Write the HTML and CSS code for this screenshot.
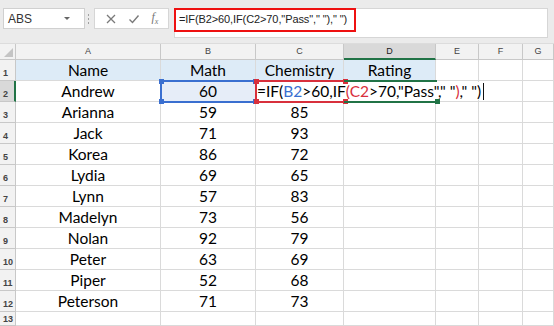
FILE: index.html
```html
<!DOCTYPE html>
<html>
  <head>
    <meta charset="UTF-8" />
    <link rel="stylesheet" href="styles.css">
  </head>
  <body>
    <div class="toolbar">
      <div class="name-box">
        <span class="name-text">ABS</span>
        <span class="name-arrow"></span>
      </div>
      <div class="grip">
        <span></span><span></span><span></span>
      </div>
      <div class="fx-box">
        <svg class="fx-icon" viewBox="0 0 12 12" width="12" height="12">
          <path d="M2 2 L10 10 M10 2 L2 10" stroke="#7a7a7a" stroke-width="1.3" fill="none"/>
        </svg>
        <svg class="fx-icon" viewBox="0 0 12 12" width="12" height="12">
          <path d="M1.5 6.5 L4.5 9.5 L10.5 2.5" stroke="#7a7a7a" stroke-width="1.4" fill="none"/>
        </svg>
        <span class="fx-label">f<sub>x</sub></span>
      </div>
      <div class="formula-bar">
        <div class="formula-input">=IF(B2&gt;60,IF(C2&gt;70,"Pass"," ")," ")</div>
      </div>
    </div>

    <div class="sheet">
      <div class="grid">
        <div class="corner"><span class="corner-tri"></span></div>
        <div class="col-head">A</div>
        <div class="col-head">B</div>
        <div class="col-head">C</div>
        <div class="col-head active">D</div>
        <div class="col-head">E</div>
        <div class="col-head">F</div>
        <div class="col-head">G</div>

        <div class="row-head">1</div>
        <div class="cell head">Name</div>
        <div class="cell head">Math</div>
        <div class="cell head">Chemistry</div>
        <div class="cell head">Rating</div>
        <div class="cell"></div>
        <div class="cell"></div>
        <div class="cell"></div>

        <div class="row-head active">2</div>
        <div class="cell">Andrew</div>
        <div class="cell ref-b">60</div>
        <div class="cell editing">
          <span class="edit-text">=IF(<span class="ref-blue">B2</span>&gt;60,IF<span class="ref-red">(C2</span>&gt;70,"Pass"," "<span class="ref-red">)</span>," ")<span class="caret"></span></span>
        </div>
        <div class="cell"></div>
        <div class="cell"></div>
        <div class="cell"></div>
        <div class="cell"></div>

        <div class="row-head">3</div>
        <div class="cell">Arianna</div><div class="cell">59</div><div class="cell">85</div>
        <div class="cell"></div><div class="cell"></div><div class="cell"></div><div class="cell"></div>

        <div class="row-head">4</div>
        <div class="cell">Jack</div><div class="cell">71</div><div class="cell">93</div>
        <div class="cell"></div><div class="cell"></div><div class="cell"></div><div class="cell"></div>

        <div class="row-head">5</div>
        <div class="cell">Korea</div><div class="cell">86</div><div class="cell">72</div>
        <div class="cell"></div><div class="cell"></div><div class="cell"></div><div class="cell"></div>

        <div class="row-head">6</div>
        <div class="cell">Lydia</div><div class="cell">69</div><div class="cell">65</div>
        <div class="cell"></div><div class="cell"></div><div class="cell"></div><div class="cell"></div>

        <div class="row-head">7</div>
        <div class="cell">Lynn</div><div class="cell">57</div><div class="cell">83</div>
        <div class="cell"></div><div class="cell"></div><div class="cell"></div><div class="cell"></div>

        <div class="row-head">8</div>
        <div class="cell">Madelyn</div><div class="cell">73</div><div class="cell">56</div>
        <div class="cell"></div><div class="cell"></div><div class="cell"></div><div class="cell"></div>

        <div class="row-head">9</div>
        <div class="cell">Nolan</div><div class="cell">92</div><div class="cell">79</div>
        <div class="cell"></div><div class="cell"></div><div class="cell"></div><div class="cell"></div>

        <div class="row-head">10</div>
        <div class="cell">Peter</div><div class="cell">63</div><div class="cell">69</div>
        <div class="cell"></div><div class="cell"></div><div class="cell"></div><div class="cell"></div>

        <div class="row-head">11</div>
        <div class="cell">Piper</div><div class="cell">52</div><div class="cell">68</div>
        <div class="cell"></div><div class="cell"></div><div class="cell"></div><div class="cell"></div>

        <div class="row-head">12</div>
        <div class="cell">Peterson</div><div class="cell">71</div><div class="cell">73</div>
        <div class="cell"></div><div class="cell"></div><div class="cell"></div><div class="cell"></div>

        <div class="row-head last">13</div>
        <div class="cell"></div><div class="cell"></div><div class="cell"></div>
        <div class="cell"></div><div class="cell"></div><div class="cell"></div><div class="cell"></div>
      </div>

      <!-- range highlight boxes drawn over the grid -->
      <div class="range range-b"><i class="h tl"></i><i class="h tr"></i><i class="h bl"></i><i class="h br"></i></div>
      <div class="range range-c"><i class="h tl"></i><i class="h tr"></i><i class="h bl"></i><i class="h br"></i></div>
      <div class="range range-d"><i class="h br"></i></div>
    </div>
  </body>
</html>
```

FILE: styles.css
```css
:root {
  --grid-line: #dadada;
  --head-bg: #f2f2f2;
  --head-line: #c8c8c8;
  --blue-ref: #3a6fd0;
  --red-ref: #d8303c;
  --green-sel: #217346;
  --title-fill: #ddebf7;
}

* {
  margin: 0;
  padding: 0;
  box-sizing: border-box;
}

body {
  width: 554px;
  height: 326px;
  overflow: hidden;
  background: #ffffff;
  font-family: 'Liberation Sans', Arial, sans-serif;
}

/* top formula toolbar */
.toolbar {
  height: 44px;
  background: #ebebeb;
  display: flex;
  align-items: flex-start;
  padding: 8px 6px 0 3px;
  border-bottom: 1px solid #dcdcdc;
}

.name-box {
  width: 82px;
  height: 21px;
  background: #ffffff;
  border: 1px solid #d0d0d0;
  display: flex;
  align-items: center;
  justify-content: space-between;
  padding: 0 14px 0 4px;
}

.name-text {
  font-size: 12px;
  color: #333333;
}

.name-arrow {
  width: 0;
  height: 0;
  border-left: 3px solid transparent;
  border-right: 3px solid transparent;
  border-top: 3px solid #666666;
}

.grip {
  width: 7px;
  height: 21px;
  display: flex;
  flex-direction: column;
  align-items: center;
  justify-content: center;
  gap: 2px;
}

.grip span {
  width: 1px;
  height: 2px;
  background: #a0a0a0;
}

.fx-box {
  margin-left: 2px;
  width: 75px;
  height: 21px;
  background: #ffffff;
  border: 1px solid #d6d6d6;
  display: flex;
  align-items: center;
  justify-content: space-around;
  padding: 0 4px;
}

.fx-label {
  font-family: 'Liberation Serif', serif;
  font-style: italic;
  font-size: 12px;
  color: #777777;
}

.fx-label sub {
  font-size: 8px;
}

.formula-bar {
  margin-left: 5px;
  flex: 1;
  height: 30px;
  background: #ffffff;
  border: 1px solid #d6d6d6;
}

.formula-input {
  width: 182px;
  height: 24px;
  margin-top: -1px;
  margin-left: -1px;
  border: 2px solid #ee1111;
  font-size: 11px;
  color: #222222;
  line-height: 18px;
  padding-left: 3px;
  letter-spacing: -0.1px;
  white-space: nowrap;
}

/* worksheet */
.sheet {
  position: relative;
}

.grid {
  display: grid;
  grid-template-columns: 16px 145px 95px 88px 92px 43px 44px 31px;
  grid-template-rows: 16px repeat(12, 21px) 14px;
}

.corner {
  background: var(--head-bg);
  border-right: 1px solid var(--head-line);
  border-bottom: 1px solid var(--head-line);
  position: relative;
}

.corner-tri {
  position: absolute;
  right: 2px;
  bottom: 2px;
  width: 0;
  height: 0;
  border-left: 9px solid transparent;
  border-bottom: 9px solid #c4c4c4;
}

.col-head {
  background: var(--head-bg);
  border-right: 1px solid var(--head-line);
  border-bottom: 1px solid var(--head-line);
  font-size: 9px;
  color: #444444;
  text-align: center;
  line-height: 15px;
}

.col-head.active {
  background: #d9d9d9;
  border-bottom: 2px solid var(--green-sel);
  color: #222222;
}

.row-head {
  background: var(--head-bg);
  border-right: 1px solid var(--head-line);
  border-bottom: 1px solid var(--head-line);
  font-size: 9px;
  font-weight: bold;
  color: #444444;
  display: flex;
  align-items: flex-end;
  padding: 0 0 2px 3px;
}

.row-head.last {
  padding-bottom: 1px;
  line-height: 10px;
}

.row-head.active {
  background: #d9d9d9;
  border-right: 2px solid var(--green-sel);
}

.cell {
  border-right: 1px solid var(--grid-line);
  border-bottom: 1px solid var(--grid-line);
  font-family: Lato, 'Open Sans', sans-serif;
  font-size: 15.5px;
  color: #000000;
  text-align: center;
  line-height: 20px;
  white-space: nowrap;
}

.cell.head {
  background: var(--title-fill);
}

.cell.ref-b {
  background: #e6edf8;
}

.cell.editing {
  text-align: left;
  position: relative;
  z-index: 2;
  overflow: visible;
}

.edit-text {
  padding-left: 1px;
  background: #ffffff;
}

.ref-blue {
  color: var(--blue-ref);
}

.ref-red {
  color: var(--red-ref);
}

.caret {
  display: inline-block;
  width: 1px;
  height: 17px;
  margin-left: 2px;
  vertical-align: -3px;
  background: #111111;
}

/* coloured range outlines over the grid */
.range {
  position: absolute;
  pointer-events: none;
  z-index: 3;
}

.range-b {
  left: 160px;
  top: 36px;
  width: 97px;
  height: 23px;
  border: 2px solid var(--blue-ref);
}

.range-c {
  left: 255px;
  top: 36px;
  width: 90px;
  height: 23px;
  border: 2px solid var(--red-ref);
  border-right: none;
}

.range-d {
  left: 344px;
  top: 36px;
  width: 93px;
  height: 23px;
  border-top: 2px solid var(--green-sel);
  border-bottom: 2px solid var(--green-sel);
}

.h {
  position: absolute;
  width: 5px;
  height: 5px;
}

.range-b .h { background: var(--blue-ref); }
.range-c .h { background: var(--red-ref); }
.range-d .h { background: var(--green-sel); }

.tl { left: -3px; top: -3px; }
.tr { right: -3px; top: -3px; }
.bl { left: -3px; bottom: -3px; }
.br { right: -3px; bottom: -3px; }
```
